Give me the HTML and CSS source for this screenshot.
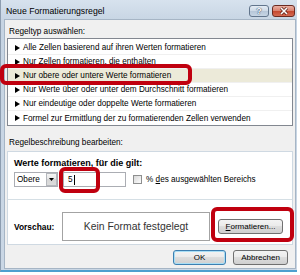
FILE: index.html
```html
<!DOCTYPE html>
<html lang="de">
<head>
<meta charset="utf-8">
<link rel="stylesheet" href="styles.css">
</head>
<body>
<div class="window">
  <div class="titlebar">
    <span class="title">Neue Formatierungsregel</span>
    <div class="caption">
      <span class="cap help">?</span>
      <span class="cap close"><svg width="10" height="8" viewBox="0 0 10 8"><path d="M2 1L8 7M8 1L2 7" stroke="#5a1e16" stroke-width="3"/><path d="M2 1L8 7M8 1L2 7" stroke="#fff" stroke-width="1.6"/></svg></span>
    </div>
  </div>
  <div class="client">
    <div class="label l1">Regeltyp auswählen:</div>
    <div class="list">
      <div class="row"><svg class="arr" width="5" height="6" viewBox="0 0 5 6"><path d="M0 0L5 3L0 6Z"/></svg><span>Alle Zellen basierend auf ihren Werten formatieren</span></div>
      <div class="row"><svg class="arr" width="5" height="6" viewBox="0 0 5 6"><path d="M0 0L5 3L0 6Z"/></svg><span>Nur Zellen formatieren, die enthalten</span></div>
      <div class="row sel"><svg class="arr" width="5" height="6" viewBox="0 0 5 6"><path d="M0 0L5 3L0 6Z"/></svg><span>Nur obere oder untere Werte formatieren</span></div>
      <div class="row"><svg class="arr" width="5" height="6" viewBox="0 0 5 6"><path d="M0 0L5 3L0 6Z"/></svg><span>Nur Werte über oder unter dem Durchschnitt formatieren</span></div>
      <div class="row"><svg class="arr" width="5" height="6" viewBox="0 0 5 6"><path d="M0 0L5 3L0 6Z"/></svg><span>Nur eindeutige oder doppelte Werte formatieren</span></div>
      <div class="row last"><svg class="arr" width="5" height="6" viewBox="0 0 5 6"><path d="M0 0L5 3L0 6Z"/></svg><span>Formel zur Ermittlung der zu formatierenden Zellen verwenden</span></div>
    </div>
    <div class="label l2">Regelbeschreibung bearbeiten:</div>
    <div class="panel">
      <div class="head">Werte formatieren, für die gilt:</div>
      <div class="crit">
        <div class="select"><span class="sel-text">Obere</span><span class="sel-btn"><svg width="5" height="3" viewBox="0 0 5 3"><path d="M0 0H5L2.5 3Z"/></svg></span></div>
        <div class="input">5<span class="caret"></span></div>
        <span class="check"></span>
        <span class="check-label">% <u>d</u>es ausgewählten Bereichs</span>
      </div>
      <div class="sep"></div>
      <div class="preview">
        <span class="vlabel">Vorschau:</span>
        <div class="pbox">Kein Format festgelegt</div>
        <button class="btn fmt"><u>F</u>ormatieren...</button>
      </div>
    </div>
    <div class="footer">
      <button class="btn ok">OK</button>
      <button class="btn cancel">Abbrechen</button>
    </div>
  </div>
</div>
<div class="mark m1"></div>
<div class="mark m2"></div>
<div class="mark m3"></div>
</body>
</html>
```
FILE: styles.css
```css
body {
  margin: 0;
  background: #fff;
  font-family: "Liberation Sans", Arial, sans-serif;
  font-size: 8.2px;
  color: #000;
}
.window {
  width: 297px;
  height: 272px;
  box-sizing: border-box;
  background: linear-gradient(#d7e2ee, #c6d4e3 22px, #cad7e5);
  border-left: 1px solid #8d9db0;
  border-bottom: 2px solid #4da0cf;
  padding-bottom: 2px;
  display: flex;
  flex-direction: column;
}
.titlebar {
  height: 20px;
  flex: none;
  display: flex;
  align-items: flex-start;
}
.title {
  padding: 1px 0 0 5px;
  line-height: 20px;
  font-size: 8.7px;
}
.caption {
  margin: 5px 2px 0 auto;
  display: flex;
  gap: 3px;
}
.cap {
  height: 12px;
  box-sizing: border-box;
  border: 1px solid #62758c;
  border-radius: 3px;
  display: flex;
  align-items: center;
  justify-content: center;
}
.help {
  width: 20px;
  background: linear-gradient(#e4ecf4, #cdd9e6 50%, #b6c6d8 50%, #c6d5e4);
  color: #fff;
  font-weight: bold;
  font-size: 9px;
  text-shadow: 0 0 1px #2d3f55, 0 0 1px #2d3f55;
}
.close {
  width: 23px;
  background: linear-gradient(#eab0a3, #d9806d 50%, #c4462e 50%, #d46b52);
  border-color: #6b2b22;
}
.client {
  flex: 1;
  margin: 0 2px 0 4px;
  padding: 0 2px;
  background: #f0f0f0;
  display: flex;
  flex-direction: column;
  box-shadow: 0 0 0 1px #a6b5c5;
}
.label {
  padding-left: 2px;
  line-height: 12px;
}
.l1 {
  padding-top: 6px;
}
.list {
  height: 88px;
  box-sizing: border-box;
  border: 1px solid #828790;
  background: #fff;
  padding-top: 2px;
}
.row {
  height: 14px;
  box-sizing: border-box;
  display: flex;
  align-items: center;
  gap: 3px;
  padding-left: 7px;
  border-bottom: 1px solid #f0f0f0;
  white-space: nowrap;
}
.row.last {
  border-bottom: none;
}
.row.sel {
  background: #ecead9;
}
.arr {
  flex: none;
}
.l2 {
  height: 25px;
  box-sizing: border-box;
  padding-top: 11px;
}
.panel {
  height: 94px;
  box-sizing: border-box;
  border: 1px solid #cfd9e2;
  background: #fff;
}
.head {
  padding: 5px 0 0 6px;
  line-height: 12px;
  font-weight: bold;
  font-size: 9px;
}
.crit {
  display: flex;
  align-items: center;
  margin-top: 3px;
  height: 15px;
  padding-left: 6px;
}
.select {
  width: 44px;
  height: 15px;
  box-sizing: border-box;
  border: 1px solid #abadb3;
  display: flex;
  align-items: center;
}
.sel-text {
  flex: 1;
  padding-left: 2px;
}
.sel-btn {
  width: 11px;
  height: 13px;
  box-sizing: border-box;
  border: 1px solid #b4b7bc;
  background: linear-gradient(#f4f4f4, #e6e6e6 50%, #d6d6d6 50%, #dcdcdc);
  display: flex;
  align-items: center;
  justify-content: center;
}
.input {
  margin-left: 5px;
  width: 63px;
  height: 15px;
  box-sizing: border-box;
  border: 1px solid #abadb3;
  display: flex;
  align-items: center;
  padding-left: 4px;
}
.caret {
  width: 1px;
  height: 10px;
  background: #000;
  margin-left: 1px;
}
.check {
  margin-left: 7px;
  width: 9px;
  height: 9px;
  box-sizing: border-box;
  border: 1px solid #8e8f8f;
  background: linear-gradient(135deg, #d8d8d8, #fdfdfd);
}
.check-label {
  margin-left: 4px;
}
.sep {
  margin-top: 12px;
  height: 1px;
  background: #d5dfe5;
}
.preview {
  margin-top: 12px;
  display: flex;
  align-items: center;
}
.vlabel {
  width: 48px;
  padding-left: 6px;
  font-weight: bold;
  font-size: 8.4px;
}
.pbox {
  width: 148px;
  height: 29px;
  box-sizing: border-box;
  border: 1px solid #a3a3a3;
  display: flex;
  align-items: center;
  justify-content: center;
  font-size: 10.4px;
  color: #333;
}
.btn {
  height: 15px;
  box-sizing: border-box;
  border: 1px solid #707070;
  border-radius: 3px;
  background: linear-gradient(#f3f3f3, #ebebeb 45%, #dddddd 50%, #cfcfcf);
  font-family: inherit;
  font-size: 8px;
  color: #000;
  padding: 0;
}
.fmt {
  margin-left: 8px;
  width: 65px;
}
.footer {
  display: flex;
  justify-content: flex-end;
  gap: 7px;
  padding: 5px 5px 0 0;
}
.ok {
  width: 53px;
  border-color: #3c7fb1;
  box-shadow: inset 0 0 0 1px #a8def5;
}
.cancel {
  width: 55px;
}
.mark {
  position: absolute;
  box-sizing: border-box;
  border: 4px solid #c0000f;
  border-radius: 6px;
}
.m1 {
  left: 0;
  top: 64px;
  width: 192px;
  height: 21px;
}
.m2 {
  left: 59px;
  top: 167px;
  width: 41px;
  height: 26px;
}
.m3 {
  left: 211px;
  top: 207px;
  width: 83px;
  height: 35px;
}
```
